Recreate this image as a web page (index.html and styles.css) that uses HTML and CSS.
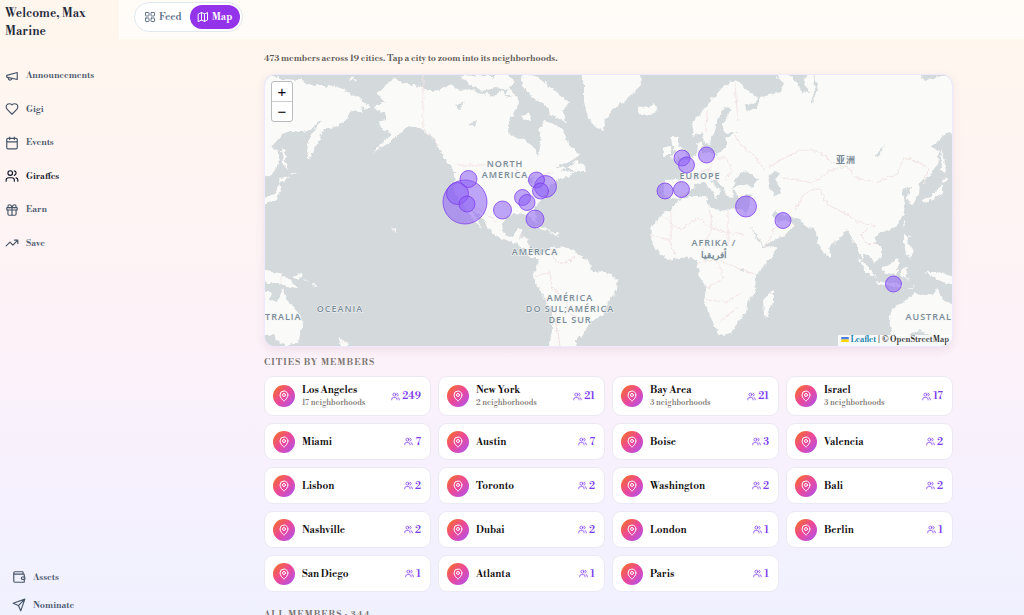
FILE: index.html
```html
<!DOCTYPE html>
<html lang="en">
<head>
<meta charset="utf-8">
<meta name="viewport" content="width=device-width, initial-scale=1">
<title>Giraffes – Map</title>
<link rel="stylesheet" href="styles.css">
</head>
<body>
<svg class="sprite" aria-hidden="true">
  <symbol id="users" viewBox="0 0 24 24"><path d="M16 21v-2a4 4 0 0 0-4-4H6a4 4 0 0 0-4 4v2"/><circle cx="9" cy="7" r="4"/><path d="M22 21v-2a4 4 0 0 0-3-3.87M16 3.13a4 4 0 0 1 0 7.75"/></symbol>
  <symbol id="pin" viewBox="0 0 24 24"><path d="M20 10c0 5-5.500 10.200-7.400 11.800a1 1 0 0 1-1.200 0C9.500 20.200 4 15 4 10a8 8 0 0 1 16 0"/><circle cx="12" cy="10" r="3"/></symbol>
  <symbol id="megaphone" viewBox="0 0 24 24"><path d="m3 11 18-5v12L3 14z"/><path d="M11.600 16.800a3 3 0 1 1-5.800-1.600"/></symbol>
  <symbol id="heart" viewBox="0 0 24 24"><path d="M19 14c1.500-1.500 3-3.200 3-5.500A5.500 5.500 0 0 0 16.500 3c-1.800 0-3 .5-4.500 2-1.500-1.500-2.700-2-4.500-2A5.500 5.500 0 0 0 2 8.500c0 2.300 1.500 4 3 5.500l7 7z"/></symbol>
  <symbol id="calendar" viewBox="0 0 24 24"><path d="M8 2v4M16 2v4M3 10h18"/><rect x="3" y="4" width="18" height="18" rx="2"/></symbol>
  <symbol id="gift" viewBox="0 0 24 24"><rect x="3" y="8" width="18" height="4" rx="1"/><path d="M12 8v13M19 12v7a2 2 0 0 1-2 2H7a2 2 0 0 1-2-2v-7M7.500 8a2.500 2.500 0 0 1 0-5C10 3 11.500 5.500 12 8c.5-2.500 2-5 4.500-5a2.500 2.500 0 0 1 0 5"/></symbol>
  <symbol id="trend" viewBox="0 0 24 24"><path d="m22 7-8.500 8.500-5-5L2 17M16 7h6v6"/></symbol>
  <symbol id="wallet" viewBox="0 0 24 24"><path d="M19 7V4a1 1 0 0 0-1-1H5a2 2 0 0 0 0 4h15a1 1 0 0 1 1 1v4M3 5v14a2 2 0 0 0 2 2h15a1 1 0 0 0 1-1v-4"/><path d="M22 12h-4a2 2 0 0 0 0 4h4z"/></symbol>
  <symbol id="send" viewBox="0 0 24 24"><path d="M22 2 15 22l-4-9-9-4zM22 2 11 13"/></symbol>
  <symbol id="grid" viewBox="0 0 24 24"><rect x="3" y="3" width="7" height="7" rx="1"/><rect x="14" y="3" width="7" height="7" rx="1"/><rect x="14" y="14" width="7" height="7" rx="1"/><rect x="3" y="14" width="7" height="7" rx="1"/></symbol>
  <symbol id="map" viewBox="0 0 24 24"><path d="m3 6 6-3 6 3 6-3v15l-6 3-6-3-6 3zM9 3v15M15 6v15"/></symbol>
</svg>

<div class="app">
  <aside class="sidebar">
    <h1 class="welcome">Welcome, Max Marine</h1>
    <nav class="nav" aria-label="Main">
      <a class="nav-link" href="#announcements"><svg class="icon"><use href="#megaphone"/></svg>Announcements</a>
      <a class="nav-link" href="#gigi"><svg class="icon"><use href="#heart"/></svg>Gigi</a>
      <a class="nav-link" href="#events"><svg class="icon"><use href="#calendar"/></svg>Events</a>
      <a class="nav-link active" href="#giraffes" aria-current="page"><svg class="icon"><use href="#users"/></svg>Giraffes</a>
      <a class="nav-link" href="#earn"><svg class="icon"><use href="#gift"/></svg>Earn</a>
      <a class="nav-link" href="#save"><svg class="icon"><use href="#trend"/></svg>Save</a>
    </nav>
    <nav class="subnav" aria-label="Account">
      <a class="nav-link" href="#assets"><svg class="icon"><use href="#wallet"/></svg>Assets</a>
      <a class="nav-link" href="#nominate"><svg class="icon"><use href="#send"/></svg>Nominate</a>
    </nav>
  </aside>

  <div class="page">
    <header class="topbar">
      <div class="switch">
        <button class="switch-btn" type="button"><svg class="icon small"><use href="#grid"/></svg>Feed</button>
        <button class="switch-btn on" type="button" aria-pressed="true"><svg class="icon small"><use href="#map"/></svg>Map</button>
      </div>
    </header>

    <main class="content">
      <p class="intro">473 members across 19 cities. Tap a city to zoom into its neighborhoods.</p>

      <section class="map" aria-label="Member map">
        <svg class="world" viewBox="265 75 687 271" preserveAspectRatio="xMidYMid slice">
          <defs>
            <filter id="coast" x="0" y="0" width="1" height="1"><feTurbulence type="fractalNoise" baseFrequency=".22" numOctaves="3" seed="4"/><feDisplacementMap in="SourceGraphic" scale="5" xChannelSelector="R" yChannelSelector="G"/></filter>
          </defs>
          <g filter="url(#coast)">
            <rect class="sea" x="254" y="65" width="708" height="291"/>
            <g class="land">
              <path d="M254 65L268 73 281 79 300 80 314 86 318 84 327 87 333 85 345 90 356 97 362 99 364 103 370 106 368 109 360 107 363 113 356 111 349 113 349 118 342 123 332 129 325 129 321 133 320 140 315 147 312 154 308 160 307 150 309 139 315 129 322 121 317 122 312 129 303 132 290 131 283 134 271 147 279 151 279 160 275 172 268 176 254 178z"/>
              <path d="M282 148L285 150 285 161 288 169 283 166zM280 178L290 176 284 181 279 182zM279 183L281 191 277 200 269 202 254 206 254 202 269 197 276 192zM290 175L298 172 292 176zM349 79L353 77 356 80 351 81z"/>
              <path d="M394 78L403 83 415 85 430 91 440 90 449 85 460 90 470 89 484 94 494 96 502 90 508 98 514 95 520 101 515 111 509 122 508 132 513 136 523 139 535 148 538 156 541 143 539 131 544 121 554 124 563 130 569 144 579 154 573 161 560 165 554 169 565 166 562 171 575 172 568 177 560 178 550 185 548 192 541 200 534 208 536 216 537 223 533 222 528 215 514 214 505 218 502 225 503 232 509 238 514 236 517 229 523 229 519 237 527 239 530 246 533 254 540 254 540 258 532 258 525 250 517 244 506 240 495 235 487 226 479 215 471 208 477 219 482 229 475 222 465 207 458 199 454 190 455 172 447 163 439 148 433 137 421 129 408 126 399 134 389 143 372 153 383 142 393 134 382 129 378 121 386 119 385 112 377 111 374 106 385 102 377 94 386 85z"/>
              <path d="M494 75L506 72 515 82 506 90 494 85zM521 71L540 78 551 88 569 102 563 111 566 122 550 115 547 106 533 98 522 86zM460 76L490 75 500 87 482 91 470 85zM508 86L515 96 507 95zM522 118L529 112 531 119 525 121zM567 168L576 161 584 165 586 171 575 171z"/>
              <path d="M580 70L584 84 584 103 588 117 594 126 602 131 606 119 614 108 624 102 633 93 641 85 640 70z"/>
              <path d="M637 106L647 108 654 103 657 110 650 116 640 114zM663 149L670 147 671 154 663 157zM671 137L678 137 678 144 685 151 687 155 677 160 670 158 676 153 674 149 672 145z"/>
              <path d="M675 163L687 160 697 154 698 144 702 142 702 152 717 154 726 148 726 138 737 132 725 133 723 125 731 109 724 107 717 121 715 131 709 145 704 143 702 132 693 136 691 123 702 112 712 99 724 86 735 80 749 91 758 99 753 105 744 103 747 112 757 108 760 97 770 95 781 92 784 83 776 76 786 70 795 82 803 92 808 93 804 80 808 70 918 70 924 81 941 76 952 75 962 80 962 136 947 133 931 147 940 152 938 163 930 175 920 182 919 194 912 206 907 198 911 187 902 190 905 203 904 213 896 227 880 233 874 239 882 248 882 257 874 263 871 257 864 253 862 261 869 267 872 275 865 268 858 250 852 238 847 229 839 239 830 246 829 252 824 254 818 242 815 228 806 227 800 219 788 216 779 214 774 210 773 216 779 222 785 219 794 225 785 235 763 246 753 230 745 216 750 204 751 194 739 197 733 188 742 184 753 187 758 180 746 171 738 175 733 186 734 197 727 196 719 182 710 180 721 191 716 198 713 191 703 182 696 184 690 192 677 199 664 196 664 180 683 179 684 172z"/>
              <path d="M679 200L690 196 706 196 709 206 721 211 734 208 744 211 753 232 762 247 777 246 771 258 756 275 755 292 747 303 746 313 737 323 732 332 719 336 714 325 709 313 704 301 706 288 699 277 697 260 687 257 668 260 658 252 651 242 652 227 661 215 671 209z"/>
              <path d="M764 315L763 300 773 290 773 302 767 317zM825 251L831 254 829 258 826 255zM857 257L868 267 878 279 867 273zM876 281L902 285 901 287 877 284zM882 267L890 265 897 258 900 263 895 275 885 274zM901 269L909 267 905 270 908 280 903 276 902 282zM904 234L909 236 907 243 913 249 911 258 905 253 906 246 903 242zM925 272L937 272 962 279 962 288 938 280zM907 289L915 286 911 289z"/>
              <path d="M892 309L905 301 915 293 925 295 934 294 937 288 943 301 953 304 962 311 962 356 946 347 938 337 920 331 903 337 892 335 889 320z"/>
              <path d="M941 149L944 157 946 173 942 172zM941 179L949 178 943 184zM942 185L942 194 933 199 924 203 922 200 931 196zM904 220L906 222 903 227z"/>
              <path d="M540 255L550 247 570 248 581 256 589 261 592 271 605 272 618 280 617 290 608 303 602 316 590 321 583 336 576 339 577 356 547 356 552 330 552 311 544 297 534 282 533 275 538 264zM535 226L544 227 552 232 540 229zM550 232L561 233 557 236z"/>
              <path d="M254 269L266 271 279 273 290 280 299 289 290 288 280 283 268 283 254 278zM254 291L272 292 270 300 278 302 283 288 288 301 300 315 303 325 298 342 286 346 277 341 274 334 254 336zM338 336L344 341 349 343 342 350zM293 277L301 273 302 276 295 280zM304 279L310 282 306 281zM312 283L319 288 313 286zM392 227L397 231 396 233z"/>
            </g>
            <path class="water" d="M775 171L780 172 776 180 781 193 775 196 770 187 768 177zM874 158L884 145 880 155zM814 70L818 90 813 103 810 103 815 92zM740 271L744 268 744 273zM527 181L534 176 532 184zM454 106L464 102 460 110zM469 125L477 120 475 126z"/>
            <path class="border" d="M423 75V129L439 145M456 165H513L523 177 538 179 552 172M470 207L483 211 496 222M735 135L741 145 756 158 765 171M768 167L781 160 800 150 817 151 832 162 846 166 855 177 876 183 898 173 904 158 918 162 929 168 923 184M781 178L798 180 812 183 830 171 846 166M795 210L805 193 819 188 828 205 846 214 858 222 875 226M683 178L696 180 701 171 710 170 713 158 726 158 732 171 724 181M702 171L720 172M707 110L706 132M735 84L738 121M661 215L680 230 697 218 712 228 728 233 745 235M671 209L671 240M709 206L712 228 701 250M728 210V247L718 260 739 268 756 275M652 235L669 240 675 255M697 263L717 260 724 278 707 288M706 300L726 302 741 293M719 322L738 307M550 248L555 260 565 264 575 256M535 276L550 272 552 287 564 298 570 313 584 325M555 312L560 346M520 235L528 240M765 247L776 226M868 228L861 235 868 245 877 242M281 273V283"/>
          </g>
          <g class="label">
            <text x="505" y="167">NORTH</text><text x="505" y="178">AMERICA</text>
            <text x="700" y="179">EUROPE</text><text x="846" y="163">亚洲</text>
            <text x="535" y="255">AMÉRICA</text>
            <text x="570" y="301">AMÉRICA</text><text x="570" y="312">DO SUL;AMÉRICA</text><text x="570" y="323">DEL SUR</text>
            <text x="714" y="246">AFRIKA /</text><text x="714" y="258">أفريقيا</text>
            <text x="340" y="312">OCEANIA</text><text x="273" y="320">AUSTRALIA</text><text x="934" y="320">AUSTRALIA</text>
          </g>
          <g class="marker">
            <circle cx="465" cy="202" r="22"/><circle cx="545.500" cy="186.500" r="11"/><circle cx="457.500" cy="193.500" r="11"/><circle cx="746" cy="206.500" r="10.500"/><circle cx="535" cy="219" r="9"/><circle cx="502.500" cy="210" r="9"/><circle cx="468.500" cy="179" r="8.500"/><circle cx="522.500" cy="197.500" r="8"/><circle cx="665" cy="191" r="8"/><circle cx="536.500" cy="180" r="8"/><circle cx="540.500" cy="191" r="8"/><circle cx="893.500" cy="284" r="8"/><circle cx="527" cy="202.500" r="8"/><circle cx="783" cy="220.500" r="8"/><circle cx="682" cy="158" r="8"/><circle cx="706.500" cy="155" r="8"/><circle cx="467" cy="204" r="8"/><circle cx="686.500" cy="165" r="8"/><circle cx="681.500" cy="189.500" r="8"/>
          </g>
        </svg>
        <div class="zoom">
          <button type="button" aria-label="Zoom in">+</button>
          <button type="button" aria-label="Zoom out">−</button>
        </div>
        <div class="credit"><svg class="flag" viewBox="0 0 12 8"><path fill="#4c7be1" d="M0 0h12v4H0z"/><path fill="#ffd500" d="M0 4h12v4H0z"/></svg> <a href="#leaflet">Leaflet</a> | © OpenStreetMap</div>
      </section>

      <h2 class="section-title">Cities by members</h2>
      <div class="cities" id="cities"></div>
      <h2 class="section-title members">All members · 344</h2>
    </main>
  </div>
</div>
<script src="app.js"></script>
</body>
</html>
```

FILE: styles.css
```css
* { box-sizing: border-box; }

body {
  margin: 0;
  font-family: "Libre Bodoni", "Liberation Serif", serif;
  font-size: 9px;
  color: #1e293b;
  background: linear-gradient(180deg, #fff7ed 0%, #fdf2f8 55%, #f7f1fd 75%, #f0f1ff 100%);
}

button { font: inherit; color: inherit; border: 0; padding: 0; background: none; cursor: pointer; }
a { color: inherit; text-decoration: none; }
.sprite { display: none; }

.icon {
  width: 14px;
  height: 14px;
  flex: none;
  fill: none;
  stroke: currentColor;
  stroke-width: 2;
  stroke-linecap: round;
  stroke-linejoin: round;
}
.icon.small { width: 12px; height: 12px; }

.app { display: grid; grid-template-columns: 119px 1fr; height: 100vh; overflow: hidden; }

.sidebar { display: flex; flex-direction: column; padding: 5px 5px 0; overflow: hidden; }
.welcome { margin: 0; padding-right: 20px; font-size: 12px; line-height: 18px; font-weight: 600; }
.nav { display: grid; grid-auto-rows: 1fr; height: 201px; margin-top: 18px; }
.nav-link { display: flex; align-items: center; gap: 7px; font-size: 9px; font-weight: 600; color: #475569; }
.nav-link.active { color: #0f172a; }
.subnav { display: grid; grid-auto-rows: 28px; margin-top: auto; padding-left: 7px; margin-bottom: -4px; }

.page { display: flex; flex-direction: column; min-width: 0; overflow: hidden; }
.topbar { flex: none; padding: 2px 15px 7px; background: rgba(255, 255, 255, .6); }
.switch {
  display: inline-flex;
  padding: 2px;
  border: 1px solid #e2e8f0;
  border-radius: 15px;
  background: #fff;
  vertical-align: top;
}
.switch-btn {
  display: flex;
  align-items: center;
  gap: 3px;
  height: 24px;
  padding: 0 8px 0 7px;
  border-radius: 12px;
  font-size: 10px;
  font-weight: 600;
  color: #64748b;
}
.switch-btn.on { background: #9333ea; color: #fff; }

.content { flex: 1; min-height: 0; overflow-y: auto; scrollbar-width: none; padding: 12px 71px 24px 145px; }
.intro { margin: 0 0 7px; line-height: 16px; font-size: 9px; font-weight: 500; color: #57534e; }

.map {
  position: relative;
  border: 1px solid #ede9fe;
  border-radius: 11px;
  overflow: hidden;
  background: #d4dadc;
  box-shadow: 0 3px 10px rgba(120, 60, 120, .1);
}
.world { display: block; width: 100%; height: auto; }
.sea, .water { fill: #d4dadc; }
.land { fill: #fafaf8; }
.border { fill: none; stroke: #f2e4e4; stroke-width: 1; }
.label {
  font: 600 9px "Open Sans", "Noto Sans CJK SC", sans-serif;
  fill: #7b8c98;
  text-anchor: middle;
  letter-spacing: 1px;
  stroke: #f4f6f6;
  stroke-width: 1;
  paint-order: stroke;
}
.marker { fill: #8b5cf6; fill-opacity: .55; stroke: #7c3aed; stroke-opacity: .75; stroke-width: 1; }

.zoom {
  position: absolute;
  top: 6px;
  left: 6px;
  border: 1px solid #b9bcbd;
  border-radius: 3px;
  overflow: hidden;
  background: #fff;
}
.zoom button { display: block; width: 20px; height: 19px; font: 400 15px/18px "Liberation Sans", sans-serif; color: #000; }
.zoom button + button { height: 20px; border-top: 1px solid #ccc; }
.credit {
  position: absolute;
  right: 0;
  bottom: 0;
  padding: 0 3px;
  line-height: 11px;
  font-size: 8px;
  font-weight: 500;
  color: #333;
  background: rgba(255, 255, 255, .8);
}
.credit a { color: #0078a8; }
.flag { width: 8px; height: 5px; }

.section-title {
  margin: 9px 0 6px;
  line-height: 14px;
  font-size: 9px;
  font-weight: 600;
  letter-spacing: 1px;
  text-transform: uppercase;
  color: #78716c;
}
.section-title.members { margin-top: 16px; }

.cities { display: grid; grid-template-columns: repeat(4, minmax(0, 1fr)); gap: 7px; }
.city {
  display: flex;
  align-items: center;
  gap: 7px;
  min-height: 37px;
  padding: 6px 9px 6px 8px;
  border: 1px solid #ede9f4;
  border-radius: 9px;
  background: #fff;
  text-align: left;
}
.badge {
  display: grid;
  place-items: center;
  flex: none;
  width: 22px;
  height: 22px;
  border-radius: 50%;
  color: #fff;
  background: linear-gradient(135deg, #f97316, #ec4899 50%, #a855f7);
}
.info { flex: 1; min-width: 0; }
.name { display: block; line-height: 14px; font-size: 10px; font-weight: 600; color: #0c0a09; }
.hoods { display: block; line-height: 12px; font-size: 8px; color: #78716c; }
.count { display: flex; align-items: center; gap: 2px; font-size: 10px; font-weight: 600; color: #7c3aed; }
.count .icon { width: 9px; height: 9px; }
```

FILE: app.js
```js
const cities = [
  ["Los Angeles", 249, 17], ["New York", 21, 2], ["Bay Area", 21, 3], ["Israel", 17, 3],
  ["Miami", 7], ["Austin", 7], ["Boise", 3], ["Valencia", 2],
  ["Lisbon", 2], ["Toronto", 2], ["Washington", 2], ["Bali", 2],
  ["Nashville", 2], ["Dubai", 2], ["London", 1], ["Berlin", 1],
  ["San Diego", 1], ["Atlanta", 1], ["Paris", 1]
];

document.getElementById("cities").innerHTML = cities.map(([name, members, hoods]) => `
  <button class="city" type="button">
    <span class="badge"><svg class="icon small"><use href="#pin"/></svg></span>
    <span class="info"><span class="name">${name}</span>${hoods ? `<span class="hoods">${hoods} neighborhoods</span>` : ""}</span>
    <span class="count"><svg class="icon"><use href="#users"/></svg>${members}</span>
  </button>`).join("");
```
